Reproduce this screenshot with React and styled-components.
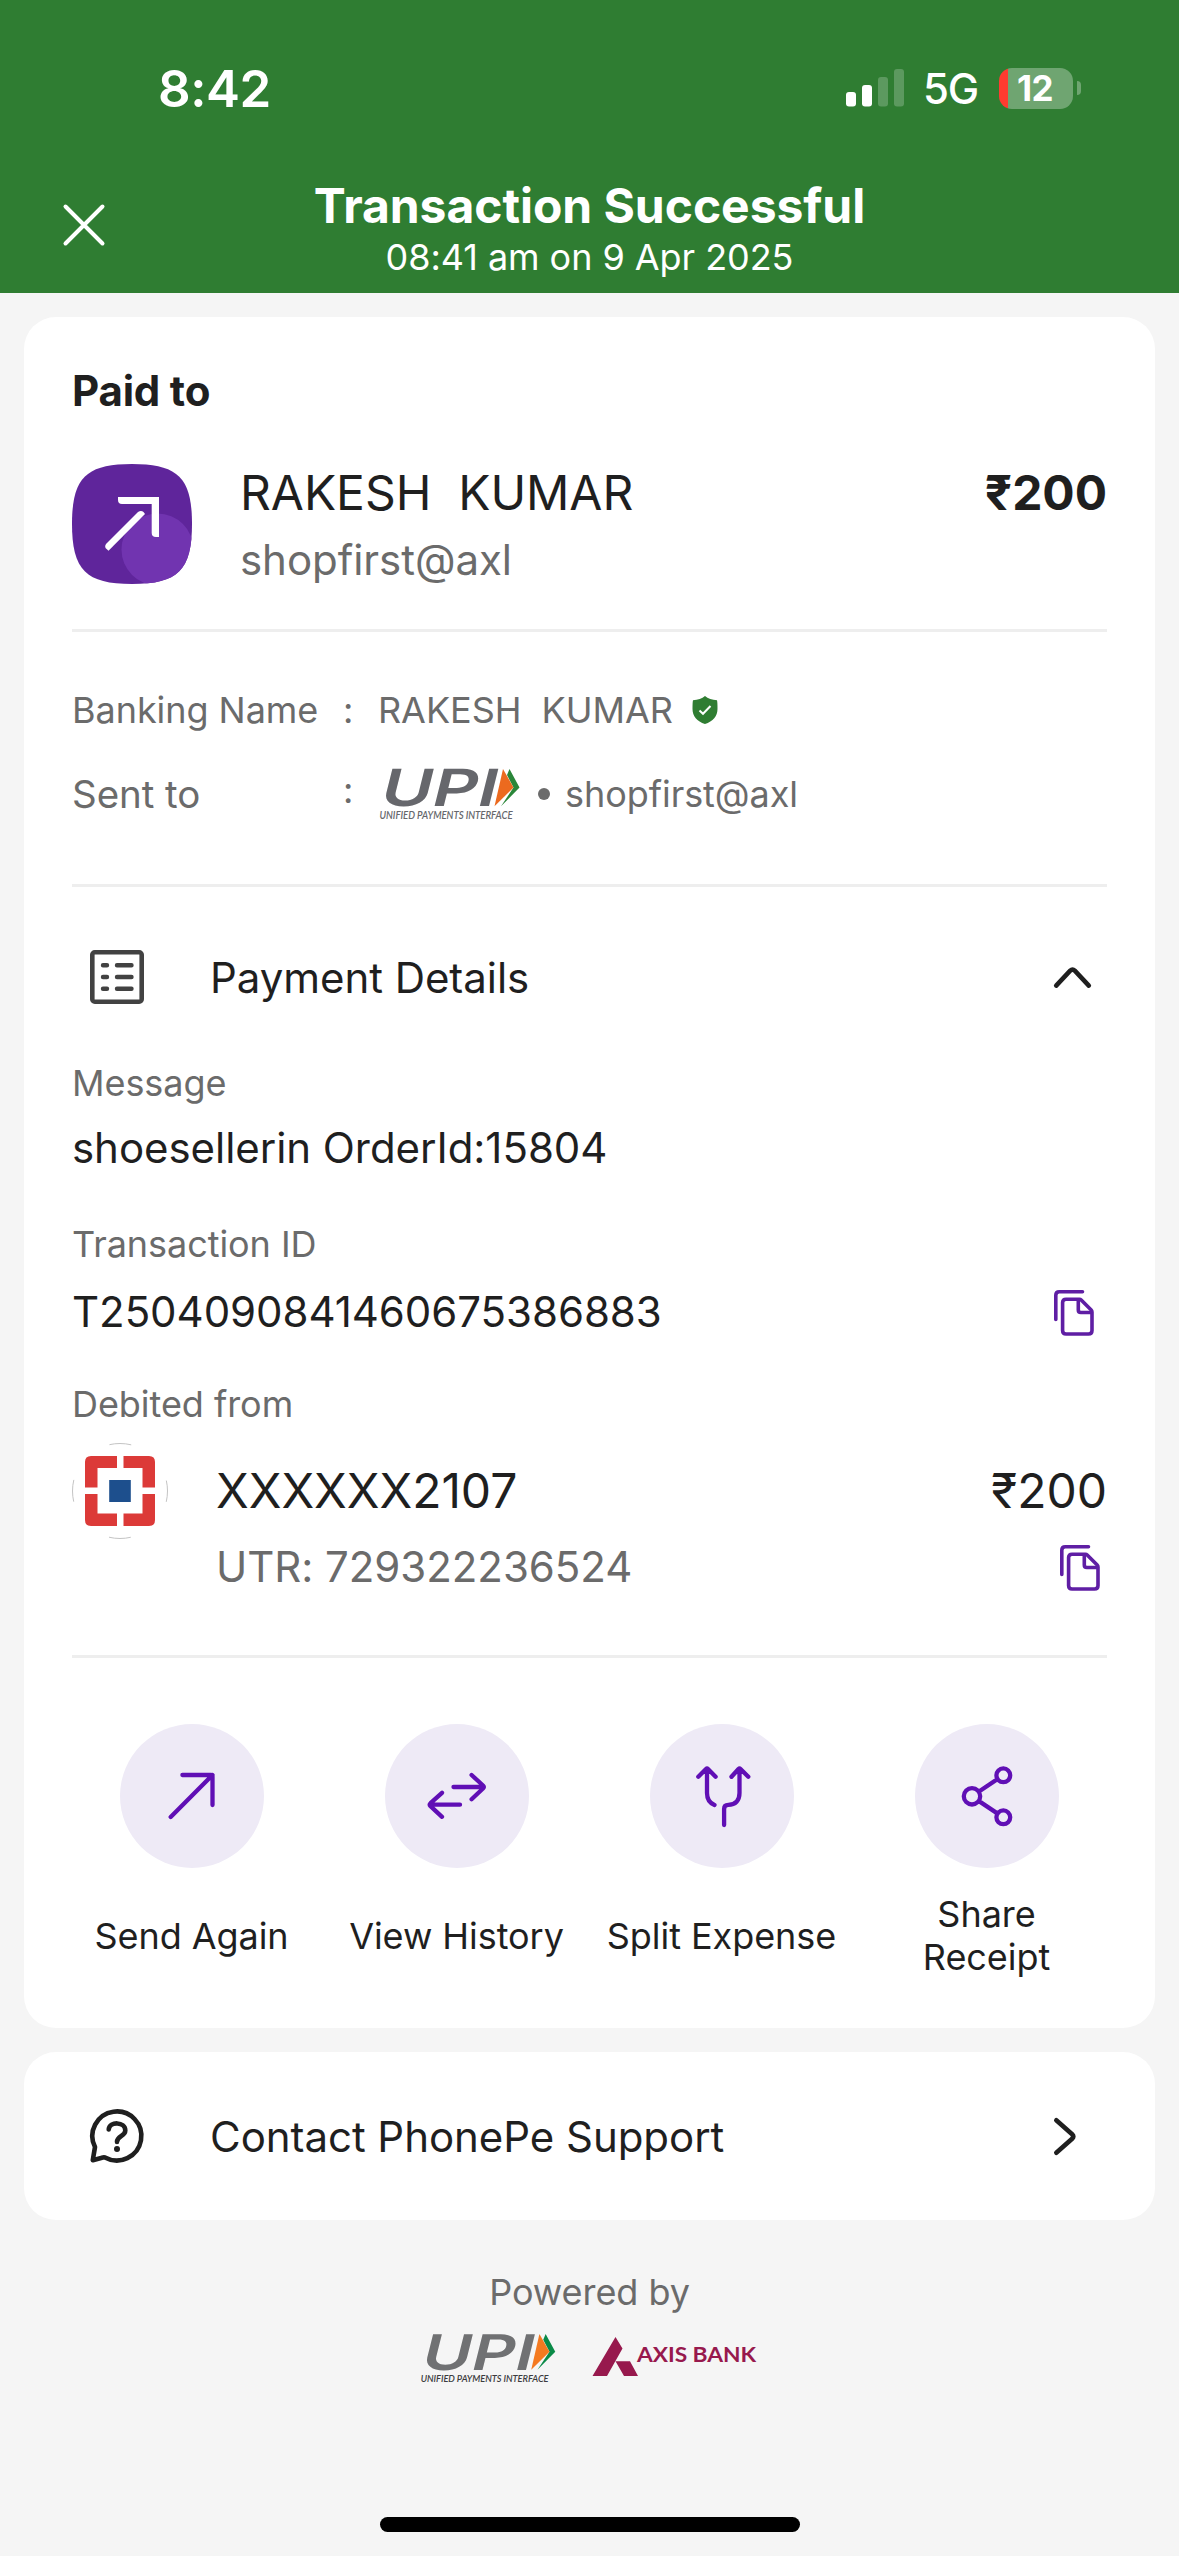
import React from 'react';
import styled, { createGlobalStyle } from 'styled-components';

const colors = {
  green: '#2f7d32',
  page: '#f5f5f5',
  ink: '#1f1f1f',
  grey: '#6b6b6b',
  line: '#eeeeee',
  purple: '#5f1ea4',
  action: '#600fb5',
  lilac: '#eeeaf6',
};

const GlobalStyle = createGlobalStyle`
  * {
    box-sizing: border-box;
  }
  body {
    margin: 0;
    background: ${colors.page};
    color: ${colors.ink};
    font-family: Inter, 'Liberation Sans', sans-serif;
    letter-spacing: -0.05px;
  }
  svg {
    display: block;
    flex: none;
    overflow: visible;
  }
`;

const Screen = styled.div`
  display: flex;
  flex-direction: column;
  width: 1179px;
  height: 2556px;
  overflow: hidden;
`;
const Header = styled.header`
  height: 293px;
  background: ${colors.green};
  color: #fff;
`;
const StatusBar = styled.div`
  display: flex;
  justify-content: space-between;
  align-items: center;
  height: 176px;
  padding: 0 98px 0 158px;
`;
const Clock = styled.div`
  font-size: 51px;
  font-weight: 600;
  letter-spacing: -0.5px;
`;
const StatusIcons = styled.div`
  display: flex;
  align-items: center;
`;
const Network = styled.span`
  margin: 2px 21px 0 18px;
  font-size: 42px;
  font-weight: 500;
  line-height: 50px;
  letter-spacing: -1.2px;
`;
const Battery = styled.div`
  display: flex;
  align-items: center;
  justify-content: center;
  width: 74px;
  height: 41px;
  padding-right: 2px;
  border-radius: 13px;
  background: linear-gradient(to right, #ff3b30 9px, #6fa571 9px);
  font-size: 35px;
  font-weight: 700;
  line-height: 41px;
  letter-spacing: -0.5px;
`;
const BatteryTip = styled.div`
  width: 4px;
  height: 14px;
  margin-left: 4px;
  border-radius: 0 4px 4px 0;
  background: #6fa571;
`;
const TitleBar = styled.div`
  display: grid;
  grid-template-columns: 104px 1fr 104px;
`;
const CloseButton = styled.div`
  padding: 28px 0 0 63px;
`;
const Titles = styled.div`
  text-align: center;
`;
const Title = styled.h1`
  margin: 0;
  font-size: 48px;
  font-weight: 700;
  line-height: 60px;
`;
const Subtitle = styled.div`
  font-size: 36px;
  line-height: 42px;
`;

const Card = styled.section`
  margin: 24px 24px 0;
  padding: ${({ $pad }) => $pad || '49px 48px'};
  border-radius: 32px;
  background: #fff;
`;
const CardTitle = styled.h2`
  margin: 0;
  font-size: 42px;
  font-weight: 700;
  line-height: 50px;
  letter-spacing: -0.2px;
`;
const Payee = styled.div`
  display: flex;
  margin-top: 48px;
`;
const PayeeInfo = styled.div`
  flex: 1;
  margin-left: 48px;
`;
const Name = styled.div`
  font-size: 48px;
  line-height: 57px;
  white-space: pre;
`;
const Handle = styled.div`
  margin-top: 14px;
  color: ${colors.grey};
  font-size: 42px;
  line-height: 49px;
`;
const Amount = styled.div`
  font-size: 48px;
  font-weight: ${({ $bold }) => ($bold ? 700 : 400)};
  line-height: 57px;
`;
const Divider = styled.hr`
  height: 3px;
  margin: ${({ $top }) => $top}px 0 0;
  border: 0;
  background: ${colors.line};
`;
const InfoRow = styled.div`
  display: grid;
  grid-template-columns: 271px 35px auto 1fr;
  align-items: center;
  height: ${({ $height }) => $height}px;
  margin-top: ${({ $top }) => $top}px;
  color: ${colors.grey};
  font-size: 36px;
  white-space: pre;
`;
const InfoLabel = styled.span`
  font-size: ${({ $size }) => $size || 36}px;
`;
const Colon = styled.span`
  padding-bottom: ${({ $lift }) => $lift || 0}px;
`;
const InfoValue = styled.span`
  display: flex;
  align-items: center;
`;
const Verified = styled.span`
  margin-left: 19px;
`;
const LogoSlot = styled.span`
  padding-left: 1px;
`;
const Dot = styled.i`
  width: 12px;
  height: 12px;
  margin: 0 15px 0 18px;
  border-radius: 50%;
  background: ${colors.grey};
`;
const ListHeader = styled.div`
  display: flex;
  align-items: center;
  height: 60px;
  margin-top: ${({ $top }) => $top || 0}px;
  padding: 0 ${({ $right }) => $right}px 0 18px;
  font-size: 42px;
`;
const ListTitle = styled.span`
  flex: 1;
  margin-left: 66px;
  padding-top: 2px;
  line-height: 50px;
`;
const FieldLabel = styled.div`
  margin-top: ${({ $top }) => $top}px;
  color: ${colors.grey};
  font-size: 36px;
  line-height: 44px;
`;
const FieldValue = styled.div`
  display: flex;
  justify-content: space-between;
  align-items: center;
  height: 50px;
  margin-top: ${({ $top }) => $top}px;
  padding-right: 13px;
  font-size: 42px;
  line-height: 48px;
`;
const FieldText = styled.span`
  padding-bottom: 2px;
`;
const Account = styled.div`
  display: grid;
  grid-template-columns: 96px 1fr auto;
  grid-template-rows: 96px 50px;
  grid-gap: 3px 48px;
  align-items: center;
  margin-top: 17px;

  ${Name}, ${Amount} {
    padding-bottom: 2px;
  }
`;
const Utr = styled.div`
  grid-column: 2;
  padding-bottom: 1px;
  color: ${colors.grey};
  font-size: 42px;
`;
const CopyUtr = styled.div`
  justify-self: end;
  padding: 2px 7px 0 0;
`;
const Actions = styled.div`
  display: grid;
  grid-template-columns: repeat(4, 265px);
  margin: 66px -12px 0 -13px;
`;
const Action = styled.div`
  display: flex;
  flex-direction: column;
  align-items: center;
`;
const ActionIcon = styled.div`
  width: 144px;
  height: 144px;
  border-radius: 50%;
  background: ${colors.lilac};
`;
const ActionLabel = styled.div`
  display: flex;
  align-items: center;
  height: 86px;
  margin-top: 25px;
  font-size: 36px;
  line-height: 43px;
  text-align: center;
  white-space: pre-line;
`;
const Footer = styled.footer`
  display: flex;
  flex: 1;
  flex-direction: column;
  align-items: center;
  margin-top: 50px;
`;
const Powered = styled.div`
  color: ${colors.grey};
  font-size: 36px;
  line-height: 44px;
`;
const Partners = styled.div`
  display: flex;
  align-items: flex-start;
  gap: 36px;
  margin: 20px 0 0 -4px;
`;
const HomeIndicator = styled.div`
  width: 420px;
  height: 15px;
  margin: auto 0 24px;
  border-radius: 8px;
  background: #000;
`;

const SignalIcon = () => (
  <svg width="59" height="38" viewBox="0 0 59 38" fill="#fff">
    <rect x="0" y="23" width="10" height="14.5" rx="3" />
    <rect x="16" y="16" width="10" height="21.5" rx="3" />
    <rect x="32" y="8" width="10" height="29.5" rx="3" opacity="0.22" />
    <rect x="48" y="0" width="10" height="37.5" rx="3" opacity="0.22" />
  </svg>
);

const CloseIcon = () => (
  <svg width="42" height="42" viewBox="0 0 42 42" stroke="#fff" strokeWidth="4" strokeLinecap="round">
    <path d="M2.5 2.5 39.5 39.5M39.5 2.5 2.5 39.5" />
  </svg>
);

const PayeeIcon = () => (
  <svg width="120" height="120" viewBox="0 0 120 120">
    <clipPath id="squircle">
      <path d="M0 60C0 14 14 0 60 0s60 14 60 60-14 60-60 60S0 106 0 60Z" />
    </clipPath>
    <g clipPath="url(#squircle)">
      <rect width="120" height="120" fill="#5f259b" />
      <circle cx="85.5" cy="85.5" r="36" fill="#7134b0" />
    </g>
    <path d="M46 33H87V73H84Q79.700 73 79.700 69V40H50Q46 40 46 36Z" fill="#fff" />
    <path d="M36.500 86.800 33.500 84Q32.500 82 34 80L66 48Q69 45.800 71.500 48L73 50Z" fill="#fff" />
  </svg>
);

const ShieldIcon = () => (
  <svg width="26" height="28" viewBox="0 0 26 28">
    <path
      d="M13 0Q17.500 4 25 4.200 25.500 6 25.500 13C25.500 20 21 25.500 13 28 5 25.500 .5 20 .5 13Q.5 6 1 4.200 8.500 4 13 0Z"
      fill={colors.green}
    />
    <path d="M7.500 14.500 11 17.800 18.500 10" fill="none" stroke="#fff" strokeWidth="2" />
  </svg>
);

const UpiLogo = ({ width, height, color = '#66676c', tag = '#66676c', orange = '#ec6a1f', green = '#2a8639' }) => (
  <svg width={width} height={height} viewBox="0 0 140 51">
    <text
      transform="translate(-1.500 37.300) skewX(-14)"
      fill={color}
      fontSize="51.300"
      fontWeight="600"
      textLength="116"
      lengthAdjust="spacingAndGlyphs">
      UPI
    </text>
    <path d="M130 0 140 18.500 121.500 37.300 134 18.500 127.500 6Z" fill={green} />
    <path d="M123.500 0 134 18.500 115 37.300Z" fill={orange} />
    <text
      x="0"
      y="50.300"
      fill={tag}
      fontFamily="Lato"
      fontStyle="italic"
      fontSize="10.500"
      fontWeight="600"
      textLength="133"
      lengthAdjust="spacingAndGlyphs">
      UNIFIED PAYMENTS INTERFACE
    </text>
  </svg>
);

const DetailsIcon = () => (
  <svg width="54" height="54" viewBox="0 0 54 54" fill="none" stroke="#424242" strokeWidth="4.600">
    <rect x="2.300" y="2.300" width="49.400" height="49.400" rx="2.500" />
    <path d="M13 15.200h4M27 15.200h14.500M13 27h4M27 27h14.500M13 38.700h4M27 38.700h14.500" strokeLinecap="round" strokeWidth="4.400" />
  </svg>
);

const ChevronUp = () => (
  <svg width="37" height="21" viewBox="0 0 37 21" fill="none" stroke={colors.ink} strokeWidth="4.600" strokeLinecap="round">
    <path d="M2.200 18.600 16.200 3.700Q18.500 1.500 20.800 3.700L34.800 18.600" />
  </svg>
);

const ChevronRight = () => (
  <svg width="22" height="37" viewBox="0 0 22 37" fill="none" stroke={colors.ink} strokeWidth="4.600" strokeLinecap="round">
    <path d="M2.300 2.200 18.100 16.200Q20.400 18.500 18.100 20.800L2.300 34.800" />
  </svg>
);

const CopyIcon = () => (
  <svg width="40" height="46" viewBox="0 0 40 46" fill="none" stroke={colors.purple} strokeWidth="3.600" strokeLinejoin="round">
    <path d="M1.800 29.500V5.300Q1.800 1.800 5.300 1.800H28.500" strokeLinecap="round" />
    <path d="M12 9.200H25.500Q26.500 9.200 27.200 9.900L37.200 19.900Q38 20.700 38 22V40.500Q38 44 34.500 44H12Q8.600 44 8.600 40.500V12.600Q8.600 9.200 12 9.200Z" />
    <path d="M24.300 9.500V20Q24.300 22.500 26.800 22.500H37.500" />
  </svg>
);

const BankLogo = () => (
  <svg width="96" height="96" viewBox="0 0 96 96">
    <circle cx="48" cy="48" r="47.500" fill="none" stroke="#c4c4c4" strokeDasharray="22 52.610" strokeDashoffset="11" />
    <path
      d="M13 44.500V19Q13 13 19 13H45V25H25.500V44.500ZM51.500 13H77Q83 13 83 19V44.500H70.500V25H51.500ZM83 51V77Q83 83 77 83H51.500V70.500H70.500V51ZM45 83H19Q13 83 13 77V51H25.500V70.500H45Z"
      fill="#dc3a38"
    />
    <rect x="37.200" y="37" width="21.600" height="22" fill="#1d4f8d" />
  </svg>
);

const HelpIcon = () => (
  <svg width="54" height="54" viewBox="0 0 54 54" fill="none" stroke={colors.ink} strokeWidth="4.600" strokeLinecap="round" strokeLinejoin="round">
    <path d="M2.800 51.200 5 38A24.500 24.500 0 1 1 15 48.400Q13.500 48 12 48.700L2.800 51.200Z" />
    <path d="M18.700 20.500C19.500 12 35.300 12.500 35.300 21.500 35.300 27.500 27 26.500 27 33" />
    <circle cx="27" cy="40" r="3" fill={colors.ink} stroke="none" />
  </svg>
);

const AxisLogo = () => (
  <svg width="164" height="42" viewBox="0 0 164 42" fill="#97194d">
    <path d="M23.500 3 30.500 14.500 15 42H0.500ZM23.500 27.300H38L46 42H32Z" />
    <text
      x="45"
      y="28.300"
      fontFamily="Lato"
      fontSize="20.800"
      fontWeight="700"
      textLength="119"
      lengthAdjust="spacingAndGlyphs">
      AXIS BANK
    </text>
  </svg>
);

const actions = [
  { label: 'Send Again', d: 'M50.700 93 92.500 51M62.400 51H91Q92.500 51 92.500 52.500V81' },
  {
    label: 'View History',
    d: 'M68.500 63H98.500M86.600 51 98 61.500Q99.500 63 98 64.500L86.600 75.200M75 80.700H45M57 68.800 45.500 79.200Q44 80.700 45.500 82.200L57 92.800',
  },
  {
    label: 'Split Expense',
    d: 'M48.300 52.800 56 45Q57 44 58 45L65.600 52.800M57 45V69C57 75 59.500 79 64.500 81M81.500 52.800 88.500 45Q89.500 44 90.500 45L98.300 52.800M89.500 45V69C89.500 76.500 85.500 80.800 78.300 80.800 75.500 80.800 74.100 82 74.100 85V101',
  },
  {
    label: 'Share\nReceipt',
    d: 'M65.200 72.300A8.200 8.200 0 1 1 48.800 72.300 8.200 8.200 0 1 1 65.200 72.300ZM95.200 51.300A6.900 6.900 0 1 1 81.400 51.300 6.900 6.900 0 1 1 95.200 51.300ZM95.200 93.300A6.900 6.900 0 1 1 81.400 93.300 6.900 6.900 0 1 1 95.200 93.300ZM64 67.500 82.300 55.200M64 77.100 82.300 89.400',
  },
];

const App = () => (
  <Screen>
    <GlobalStyle />
    <Header>
      <StatusBar>
        <Clock>8:42</Clock>
        <StatusIcons>
          <SignalIcon />
          <Network>5G</Network>
          <Battery>12</Battery>
          <BatteryTip />
        </StatusIcons>
      </StatusBar>
      <TitleBar>
        <CloseButton>
          <CloseIcon />
        </CloseButton>
        <Titles>
          <Title>Transaction Successful</Title>
          <Subtitle>08:41 am on 9 Apr 2025</Subtitle>
        </Titles>
      </TitleBar>
    </Header>

    <Card>
      <CardTitle>Paid to</CardTitle>
      <Payee>
        <PayeeIcon />
        <PayeeInfo>
          <Name>{'RAKESH  KUMAR'}</Name>
          <Handle>shopfirst@axl</Handle>
        </PayeeInfo>
        <Amount $bold>₹200</Amount>
      </Payee>
      <Divider $top={45} />

      <InfoRow $top={56} $height={44}>
        <InfoLabel>Banking Name</InfoLabel>
        <Colon>:</Colon>
        <InfoValue>{'RAKESH  KUMAR'}</InfoValue>
        <Verified>
          <ShieldIcon />
        </Verified>
      </InfoRow>
      <InfoRow $top={32} $height={60}>
        <InfoLabel $size={38.5}>Sent to</InfoLabel>
        <Colon $lift={8}>:</Colon>
        <LogoSlot>
          <UpiLogo width={141} height={51} />
        </LogoSlot>
        <InfoValue>
          <Dot />
          shopfirst@axl
        </InfoValue>
      </InfoRow>
      <Divider $top={60} />

      <ListHeader $top={60} $right={16}>
        <DetailsIcon />
        <ListTitle>Payment Details</ListTitle>
        <ChevronUp />
      </ListHeader>
      <FieldLabel $top={54}>Message</FieldLabel>
      <FieldValue $top={19}>
        <FieldText>shoesellerin OrderId:15804</FieldText>
      </FieldValue>
      <FieldLabel $top={48}>Transaction ID</FieldLabel>
      <FieldValue $top={22}>
        <FieldText>T2504090841460675386883</FieldText>
        <CopyIcon />
      </FieldValue>
      <FieldLabel $top={44}>Debited from</FieldLabel>
      <Account>
        <BankLogo />
        <Name>XXXXXX2107</Name>
        <Amount>₹200</Amount>
        <Utr>UTR: 729322236524</Utr>
        <CopyUtr>
          <CopyIcon />
        </CopyUtr>
      </Account>
      <Divider $top={63} />

      <Actions>
        {actions.map(({ label, d }) => (
          <Action key={label}>
            <ActionIcon>
              <svg
                width="144"
                height="144"
                viewBox="0 0 144 144"
                fill="none"
                stroke={colors.action}
                strokeWidth="4.300"
                strokeLinecap="round"
                strokeLinejoin="round">
                <path d={d} />
              </svg>
            </ActionIcon>
            <ActionLabel>{label}</ActionLabel>
          </Action>
        ))}
      </Actions>
    </Card>

    <Card $pad="54px 48px">
      <ListHeader $right={31}>
        <HelpIcon />
        <ListTitle>Contact PhonePe Support</ListTitle>
        <ChevronRight />
      </ListHeader>
    </Card>

    <Footer>
      <Powered>Powered by</Powered>
      <Partners>
        <UpiLogo width={136} height={49} color="#707173" tag="#3c3c3e" orange="#f47a20" green="#0a8a47" />
        <AxisLogo />
      </Partners>
      <HomeIndicator />
    </Footer>
  </Screen>
);

export default App;
